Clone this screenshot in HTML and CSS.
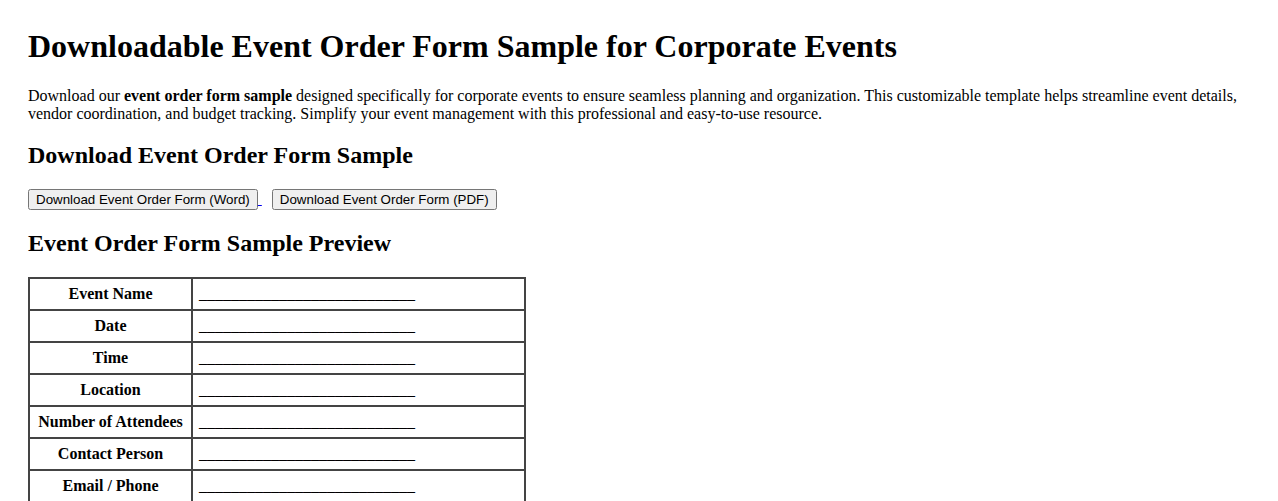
FILE: index.html
```html
<!DOCTYPE html>
<html>
<head>
<meta charset="utf-8">
<title>Event Order Form Sample</title>
<link rel="stylesheet" href="styles.css">
</head>
<body>
<h1 class="title">Downloadable Event Order Form Sample for Corporate Events</h1>
<p class="intro">Download our <strong>event order form sample</strong> designed specifically for corporate events to ensure seamless planning and organization. This customizable template helps streamline event details, vendor coordination, and budget tracking. Simplify your event management with this professional and easy-to-use resource.</p>
<h2 class="section section-first">Download Event Order Form Sample</h2>
<p class="downloads"><a class="dl" href="#"><button class="btn">Download Event Order Form (Word)</button> </a><a class="dl dl-next" href="#"><button class="btn">Download Event Order Form (PDF)</button></a></p>
<h2 class="section">Event Order Form Sample Preview</h2>
<table class="form">
<tr><th>Event Name</th><td>___________________________</td></tr>
<tr><th>Date</th><td>___________________________</td></tr>
<tr><th>Time</th><td>___________________________</td></tr>
<tr><th>Location</th><td>___________________________</td></tr>
<tr><th>Number of Attendees</th><td>___________________________</td></tr>
<tr><th>Contact Person</th><td>___________________________</td></tr>
<tr><th>Email / Phone</th><td>___________________________</td></tr>
<tr><th>Budget</th><td>___________________________</td></tr>
</table>
</body>
</html>
```
FILE: styles.css
```css
body {
  margin: 0;
  padding: 28px;
  font-family: "Liberation Serif", "Times New Roman", serif;
  font-size: 16px;
  color: #000;
  background: #fff;
}
.title {
  font-size: 32px;
  font-weight: bold;
  margin: 0 0 22px;
}
.intro {
  margin: 16px 0;
  line-height: 18px;
}
.section {
  font-size: 24px;
  font-weight: bold;
  margin: 20px 0;
}
.section-first {
  margin-top: 19px;
}
.downloads {
  margin: 16px 0;
}
.dl {
  color: #0000ee;
}
.dl-next {
  margin-left: 10px;
}
.btn {
  font-family: "Liberation Sans", Arial, sans-serif;
  font-size: 13.333px;
}
.form {
  border-collapse: collapse;
  width: 498px;
}
.form th,
.form td {
  border: 2px solid #444;
  padding: 6px 6px;
  line-height: 18px;
}
.form th {
  text-align: center;
  width: 149px;
}
.form td {
  text-align: left;
}
```
